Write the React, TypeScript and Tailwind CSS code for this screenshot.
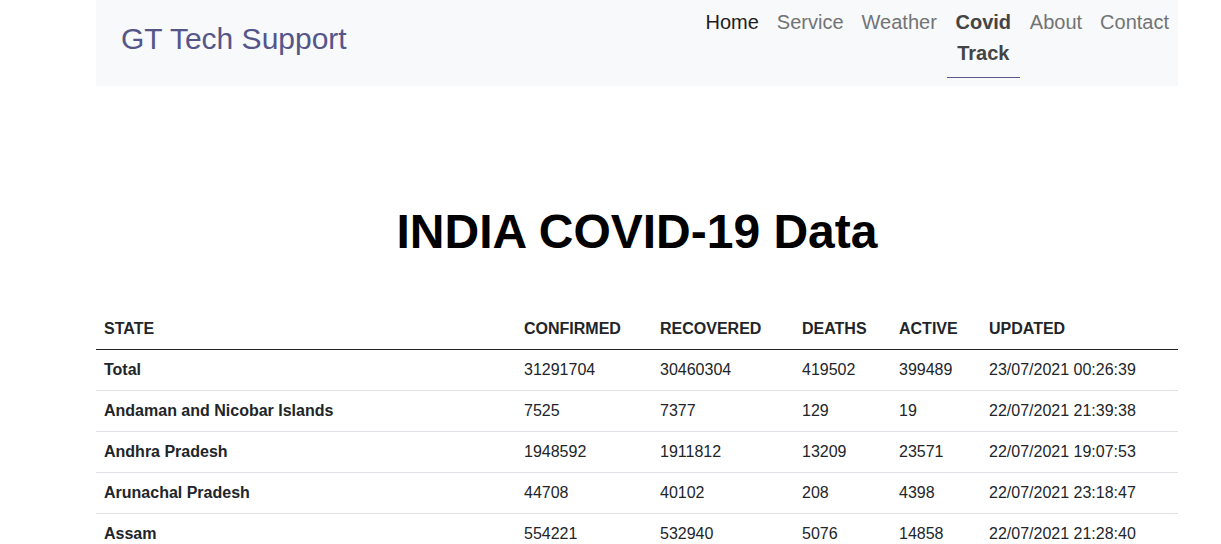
const rows = [
  { state: 'Total', confirmed: '31291704', recovered: '30460304', deaths: '419502', active: '399489', updated: '23/07/2021 00:26:39' },
  { state: 'Andaman and Nicobar Islands', confirmed: '7525', recovered: '7377', deaths: '129', active: '19', updated: '22/07/2021 21:39:38' },
  { state: 'Andhra Pradesh', confirmed: '1948592', recovered: '1911812', deaths: '13209', active: '23571', updated: '22/07/2021 19:07:53' },
  { state: 'Arunachal Pradesh', confirmed: '44708', recovered: '40102', deaths: '208', active: '4398', updated: '22/07/2021 23:18:47' },
  { state: 'Assam', confirmed: '554221', recovered: '532940', deaths: '5076', active: '14858', updated: '22/07/2021 21:28:40' },
];

function Navbar() {
  return (
    <nav className="flex justify-between items-start h-[86px] bg-[#f8f9fa]">
      <a href="#" className="pl-[25px] pt-[16px] text-[30px] leading-[45px] text-[#55558a]">
        GT Tech Support
      </a>
      <ul className="flex items-start gap-[2px] pt-[7px] pr-[1px] text-[20px] leading-[31px]">
        <li className="px-2 text-[#1d1d1f]">Home</li>
        <li className="px-2 text-[#727375]">Service</li>
        <li className="px-2 text-[#727375]">Weather</li>
        <li className="w-[73px] px-2 pb-[8px] text-center font-bold text-[#444] border-b border-[#58588a]">
          Covid Track
        </li>
        <li className="px-2 text-[#727375]">About</li>
        <li className="px-2 text-[#727375]">Contact</li>
      </ul>
    </nav>
  );
}

export default function App() {
  return (
    <div className="h-screen overflow-hidden bg-white font-['Liberation_Sans',Arial,sans-serif]">
      <div className="ml-[96px] w-[1082px]">
        <Navbar />
        <h1 className="mt-[117px] text-center text-[48px] leading-[1.2] font-bold text-black">
          INDIA COVID-19 Data
        </h1>
        <table className="mt-12 w-full table-fixed border-collapse text-[16px] leading-6 text-[#212529]">
          <thead>
            <tr className="border-b border-[#212529] text-left">
              <th className="w-[420px] p-2">STATE</th>
              <th className="w-[136px] p-2">CONFIRMED</th>
              <th className="w-[142px] p-2">RECOVERED</th>
              <th className="w-[97px] p-2">DEATHS</th>
              <th className="w-[90px] p-2">ACTIVE</th>
              <th className="w-[197px] p-2">UPDATED</th>
            </tr>
          </thead>
          <tbody>
            {rows.map((r) => (
              <tr key={r.state} className="border-b border-[#dee2e6]">
                <td className="p-2 font-bold">{r.state}</td>
                <td className="p-2">{r.confirmed}</td>
                <td className="p-2">{r.recovered}</td>
                <td className="p-2">{r.deaths}</td>
                <td className="p-2">{r.active}</td>
                <td className="p-2">{r.updated}</td>
              </tr>
            ))}
          </tbody>
        </table>
      </div>
    </div>
  );
}
